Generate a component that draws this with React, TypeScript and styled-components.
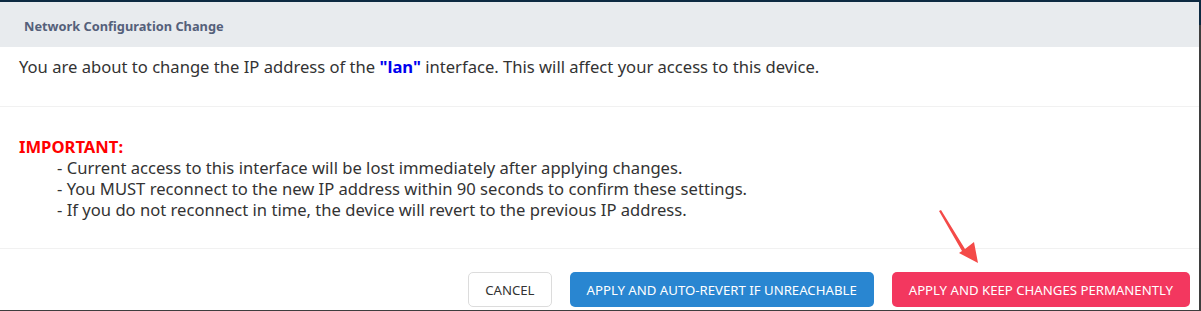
import styled, { createGlobalStyle } from "styled-components";

const GlobalStyle = createGlobalStyle`
  html, body {
    margin: 0;
    padding: 0;
  }
  body {
    font-family: "Noto Sans", "Open Sans", sans-serif;
  }
`;

const Backdrop = styled.div`
  position: relative;
  width: 1201px;
  height: 311px;
  overflow: hidden;
  padding-top: 2px;
  box-sizing: border-box;
  background: linear-gradient(#0d2a42 0 25px, #3e3e3e 25px);
`;

const Modal = styled.div`
  width: 1199px;
  height: 308px;
  background: #ffffff;
  display: flex;
  flex-direction: column;
  overflow: hidden;
`;

const Header = styled.div`
  height: 45px;
  flex: none;
  background: #e8ebee;
  display: flex;
  align-items: center;
  padding: 0 24px;
  box-sizing: border-box;
`;

const Title = styled.h5`
  margin: 0;
  font-size: 12.8px;
  font-weight: 700;
  color: #55607a;
  margin-top: 2px;
`;

const Section = styled.div<{ $pad: string }>`
  padding: ${(p) => p.$pad};
  border-bottom: 1px solid #f1f1f1;
  color: #333333;
  font-size: 16.6px;
`;

const Lead = styled.p`
  margin: 0;
  line-height: 24px;
`;

const Iface = styled.strong`
  color: #0000ee;
`;

const Warning = styled.div`
  line-height: 21px;
`;

const WarnTitle = styled.div`
  color: #ff0000;
  font-weight: 700;
`;

const WarnList = styled.ul`
  list-style: none;
  margin: 0;
  padding: 0 0 0 38px;
`;

const Footer = styled.div`
  display: flex;
  justify-content: flex-end;
  gap: 18px;
  padding: 23px 9px 0 0;
`;

const Button = styled.button<{ $variant: "plain" | "blue" | "red" }>`
  height: 35px;
  padding: 0 16px;
  border-radius: 5px;
  font-family: inherit;
  font-size: 13.2px;
  text-transform: uppercase;
  cursor: pointer;
  border: 1px solid
    ${(p) => (p.$variant === "plain" ? "#dcdcdc" : "transparent")};
  background: ${(p) =>
    p.$variant === "blue" ? "#2986d1" : p.$variant === "red" ? "#f3375f" : "#ffffff"};
  color: ${(p) => (p.$variant === "plain" ? "#333333" : "#ffffff")};
`;

const Arrow = styled.svg`
  position: absolute;
  left: 936px;
  top: 208px;
`;

export default function App() {
  return (
    <>
      <GlobalStyle />
      <Backdrop>
        <Modal>
          <Header>
            <Title>Network Configuration Change</Title>
          </Header>
          <Section $pad="8px 19px 27px">
            <Lead>
              You are about to change the IP address of the <Iface>"lan"</Iface> interface. This
              will affect your access to this device.
            </Lead>
          </Section>
          <Section $pad="29px 19px 28px">
            <Warning>
              <WarnTitle>IMPORTANT:</WarnTitle>
              <WarnList>
                <li>- Current access to this interface will be lost immediately after applying changes.</li>
                <li>- You MUST reconnect to the new IP address within 90 seconds to confirm these settings.</li>
                <li>- If you do not reconnect in time, the device will revert to the previous IP address.</li>
              </WarnList>
            </Warning>
          </Section>
          <Footer>
            <Button $variant="plain">Cancel</Button>
            <Button $variant="blue">Apply and auto-revert if unreachable</Button>
            <Button $variant="red">Apply and keep changes permanently</Button>
          </Footer>
        </Modal>
        <Arrow width="50" height="60" viewBox="0 0 50 60">
          <path d="M3 3 L5 2 L29 41 L38 34 L42 55 L23 45 L26 43 Z" fill="#f44a48" />
        </Arrow>
      </Backdrop>
    </>
  );
}
